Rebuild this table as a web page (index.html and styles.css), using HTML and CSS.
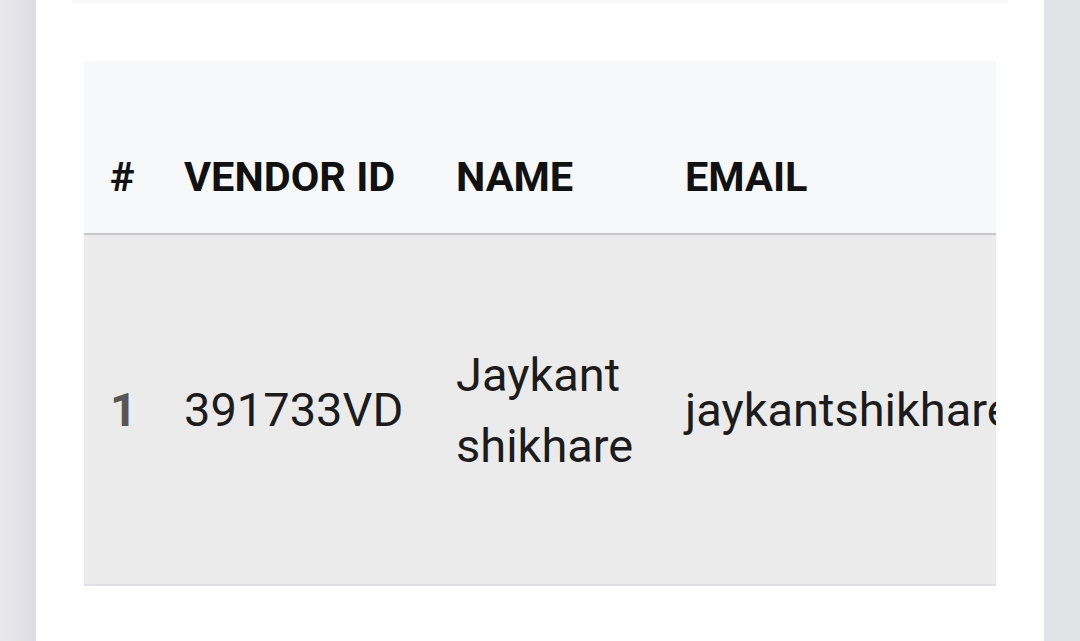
FILE: index.html
```html
<!DOCTYPE html>
<html lang="en">
<head>
<meta charset="utf-8">
<title>Vendors</title>
<link rel="stylesheet" href="styles.css">
</head>
<body>
<div class="page">
  <div class="card">
    <div class="top-shadow"></div>
    <div class="table-wrap">
      <table class="vendors">
        <colgroup>
          <col class="c-num">
          <col class="c-id">
          <col class="c-name">
          <col class="c-email">
        </colgroup>
        <thead>
          <tr>
            <th>#</th>
            <th>VENDOR ID</th>
            <th>NAME</th>
            <th>EMAIL</th>
          </tr>
        </thead>
        <tbody>
          <tr>
            <td class="num">1</td>
            <td>391733VD</td>
            <td>Jaykant shikhare</td>
            <td>jaykantshikhare@gmail.com</td>
          </tr>
        </tbody>
      </table>
    </div>
  </div>
</div>
</body>
</html>
```

FILE: styles.css
```css
html, body {
  margin: 0;
  padding: 0;
}
body {
  font-family: Roboto, "Liberation Sans", sans-serif;
  background: #e2e3e7;
  width: 1080px;
  height: 641px;
  overflow: hidden;
}
.page {
  display: flex;
  height: 641px;
  background: linear-gradient(90deg, #e9e9ed 0px, #dddde3 36px, #e2e3e7 36px);
  padding: 0 36px 0 36px;
  box-sizing: border-box;
}
.card {
  flex: 1;
  background: #ffffff;
  display: flex;
  flex-direction: column;
}
.top-shadow {
  height: 3px;
  margin: 0 36px;
  background: #f8f8f9;
}
.table-wrap {
  margin: 58px 48px 0 48px;
  overflow: hidden;
  width: 912px;
}
.vendors {
  border-collapse: collapse;
  table-layout: fixed;
  width: 1300px;
}
.c-num { width: 74px; }
.c-id { width: 272px; }
.c-name { width: 229px; }
.c-email { width: 725px; }
.vendors th {
  background: #f7f8fa;
  color: #111111;
  font-weight: 700;
  font-size: 41.5px;
  line-height: 63px;
  text-align: left;
  vertical-align: bottom;
  height: 173px;
  box-sizing: border-box;
  padding: 0 20px 25px 26px;
  border-bottom: 2px solid #c6c7ca;
  white-space: nowrap;
}
.vendors td {
  background: #ebebeb;
  color: #1c1c1c;
  font-size: 47px;
  line-height: 71px;
  vertical-align: middle;
  height: 351px;
  box-sizing: border-box;
  padding: 0 14px 0 26px;
  border-bottom: 2px solid #dfe0e5;
}
.vendors td.num {
  color: #555658;
  font-weight: 700;
}
.vendors td:last-child {
  white-space: nowrap;
}
```
